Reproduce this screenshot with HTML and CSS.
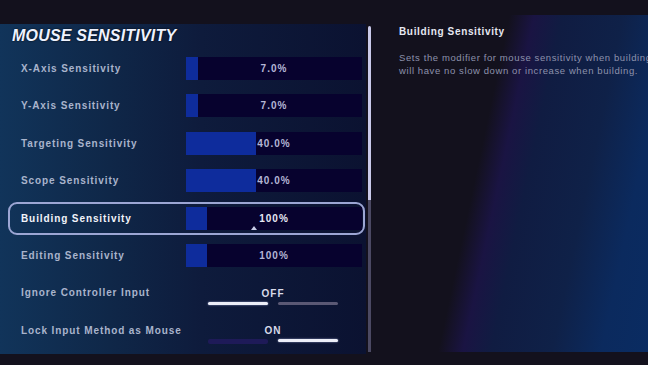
FILE: index.html
```html
<!DOCTYPE html>
<html lang="en">
<head>
    <meta charset="UTF-8">
    <title>Mouse Sensitivity</title>
    <link rel="stylesheet" href="styles.css">
</head>
<body>
    <div class="screen">
        <div class="settings">
            <h1 class="settings-title">MOUSE SENSITIVITY</h1>
            <div class="list">
                <div class="row">
                    <div class="row-label">X-Axis Sensitivity</div>
                    <div class="track"><div class="fill" style="width: 7%"></div><span class="value">7.0%</span></div>
                </div>
                <div class="row">
                    <div class="row-label">Y-Axis Sensitivity</div>
                    <div class="track"><div class="fill" style="width: 7%"></div><span class="value">7.0%</span></div>
                </div>
                <div class="row">
                    <div class="row-label">Targeting Sensitivity</div>
                    <div class="track"><div class="fill" style="width: 40%"></div><span class="value">40.0%</span></div>
                </div>
                <div class="row">
                    <div class="row-label">Scope Sensitivity</div>
                    <div class="track"><div class="fill" style="width: 40%"></div><span class="value">40.0%</span></div>
                </div>
                <div class="row active">
                    <div class="row-label">Building Sensitivity</div>
                    <div class="track"><div class="fill" style="width: 12%"></div><span class="value">100%</span><span class="caret"></span></div>
                </div>
                <div class="row">
                    <div class="row-label">Editing Sensitivity</div>
                    <div class="track"><div class="fill" style="width: 12%"></div><span class="value">100%</span></div>
                </div>
                <div class="row">
                    <div class="row-label">Ignore Controller Input</div>
                    <div class="toggle">
                        <span class="toggle-value">OFF</span>
                        <div class="toggle-bars">
                            <span class="bar bar-on"></span>
                            <span class="bar bar-grey"></span>
                        </div>
                    </div>
                </div>
                <div class="row">
                    <div class="row-label">Lock Input Method as Mouse</div>
                    <div class="toggle">
                        <span class="toggle-value">ON</span>
                        <div class="toggle-bars">
                            <span class="bar bar-dim"></span>
                            <span class="bar bar-on"></span>
                        </div>
                    </div>
                </div>
            </div>
        </div>

        <div class="scrollbar">
            <div class="scroll-thumb"></div>
            <div class="scroll-rest"></div>
        </div>

        <div class="details">
            <h2 class="details-title">Building Sensitivity</h2>
            <p class="details-text">
                <span>Sets the modifier for mouse sensitivity when building. You</span>
                <span>will have no slow down or increase when building.</span>
            </p>
        </div>
    </div>
</body>
</html>
```

FILE: styles.css
```css
body {
    margin: 0;
    width: 648px;
    height: 365px;
    overflow: hidden;
    background: #13111d;
    font-family: "Liberation Sans", Arial, sans-serif;
}

.screen {
    display: flex;
    height: 365px;
}

.settings {
    width: 366px;
    height: 330px;
    margin-top: 24px;
    background: linear-gradient(90deg, #11345a 0%, #0f2748 30%, #0e1b3c 55%, #0b1231 100%);
}

.settings-title {
    margin: 0;
    padding: 3px 12px 6.5px;
    height: 18px;
    line-height: 18px;
    font-size: 16px;
    font-weight: bold;
    font-style: italic;
    letter-spacing: 0.2px;
    color: #eef2ff;
    text-shadow: 0 0 2px #000;
}

.list {
    display: grid;
    grid-auto-rows: 33px;
    row-gap: 4.4px;
    margin-top: 0.5px;
}

.row {
    display: flex;
    align-items: center;
    margin-left: 8px;
    width: 353px;
    border: 2px solid transparent;
    border-radius: 9px;
}

.row.active {
    border-color: #9ca6d4;
}

.row-label {
    width: 165px;
    padding-left: 11px;
    font-size: 10px;
    font-weight: bold;
    letter-spacing: 0.9px;
    white-space: nowrap;
    color: #a9b4cc;
}

.row.active .row-label {
    color: #f2f4fa;
}

.track {
    position: relative;
    width: 176px;
    height: 23px;
    background: #07022e;
}

.fill {
    height: 100%;
    background: #0e2c9c;
}

.value {
    position: absolute;
    top: 0;
    left: 0;
    right: 0;
    line-height: 23px;
    text-align: center;
    font-size: 10px;
    font-weight: bold;
    letter-spacing: 1px;
    color: #b4b6d6;
}

.row.active .value {
    color: #e6e8f4;
}

.caret {
    position: absolute;
    left: 65px;
    bottom: 0;
    border-left: 3px solid transparent;
    border-right: 3px solid transparent;
    border-bottom: 4px solid #c8cce8;
}

.toggle {
    width: 130px;
    margin-left: 22px;
    padding-top: 8px;
    display: flex;
    flex-direction: column;
    align-items: center;
    gap: 3px;
}

.toggle-value {
    font-size: 10px;
    font-weight: bold;
    line-height: 11px;
    letter-spacing: 1px;
    color: #d8dae8;
}

.toggle-bars {
    display: flex;
    gap: 10px;
}

.bar {
    width: 60px;
    height: 3px;
    border-radius: 2px;
}

.bar-on {
    background: #eceef8;
    box-shadow: 0 0 2px #9aa0c8;
}

.bar-grey {
    background: #5a5874;
}

.bar-dim {
    height: 5px;
    background: #1e1a58;
}

.scrollbar {
    width: 3px;
    height: 326px;
    margin-top: 26px;
    margin-left: 2px;
    display: flex;
    flex-direction: column;
}

.scroll-thumb {
    height: 174px;
    background: #c9c9ea;
    border-radius: 2px 2px 0 0;
}

.scroll-rest {
    flex: 1;
    background: #4b4963;
}

.details {
    flex: 1;
    padding: 26px 0 0 28px;
    overflow: hidden;
    background:
        linear-gradient(180deg, #13111d 15px, transparent 15px, transparent 352px, #13111d 352px),
        linear-gradient(102deg, #13111d 0%, #13111d 40%, #1a1443 47%, #101c42 55%, #0f2148 72%, #0b2a5e 86%, #0a2c62 100%);
}

.details-title {
    margin: 0;
    font-size: 10px;
    font-weight: bold;
    line-height: 12px;
    letter-spacing: 0.65px;
    color: #e6e8f2;
}

.details-text {
    margin: 13px 0 0;
    font-size: 9.5px;
    line-height: 13px;
    letter-spacing: 0.6px;
    color: #8d92ac;
}

.details-text span {
    display: block;
    white-space: nowrap;
}
```
